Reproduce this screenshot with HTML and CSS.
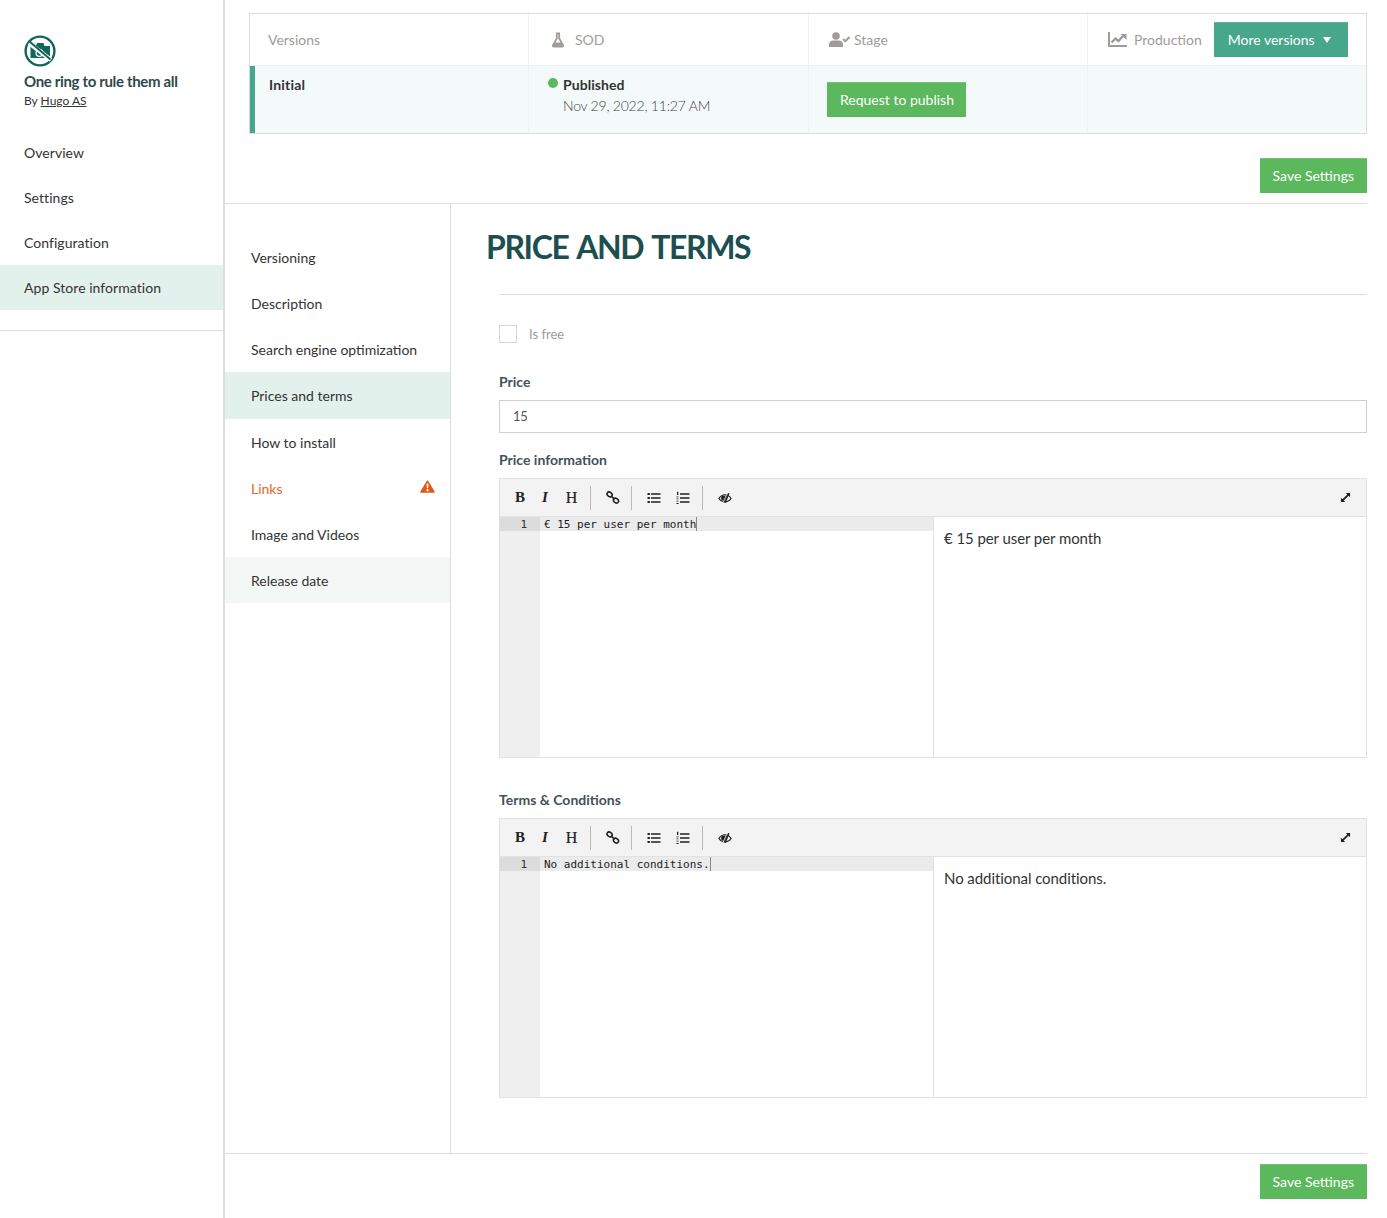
FILE: index.html
```html
<!DOCTYPE html>
<html lang="en">
<head>
<meta charset="utf-8">
<title>Price and terms</title>
<link rel="stylesheet" href="styles.css">
</head>
<body>
<svg class="defs" width="0" height="0" aria-hidden="true">
  <defs>
    <symbol id="i-link" viewBox="0 0 14 14"><g fill="none" stroke="#222" stroke-width="1.600"><ellipse cx="3.600" cy="3.400" rx="2.700" ry="2.100" transform="rotate(35 3.600 3.400)"/><ellipse cx="10" cy="9.600" rx="2.700" ry="2.100" transform="rotate(35 10 9.600)"/><path d="M5 5l3.500 3.200"/></g></symbol>
    <symbol id="i-ul" viewBox="0 0 14 14"><path fill="#222" d="M.5 2h2.400v2H.5zM.5 6h2.400v2H.5zM.5 10h2.400v2H.5zM4 2.300h9.500v1.500H4zM4 6.300h9.500v1.500H4zM4 10.300h9.500v1.500H4z"/></symbol>
    <symbol id="i-ol" viewBox="0 0 14 14"><path fill="#222" d="M1 .8h1.300v3.200H1zM.4 5.400h2.200v.8H.4zM.4 7.400h2.200v.9H.4zM.4 9.700h2.200v.8H.4zM.4 12h2.200v.9H.4zM4 2.300h9.500v1.500H4zM4 6.300h9.500v1.500H4zM4 10.300h9.500v1.500H4z"/></symbol>
    <symbol id="i-eye" viewBox="0 0 14 14"><path fill="none" stroke="#222" stroke-width="1.100" d="M.9 7.400C2.500 5 4.700 3.800 7 3.800s4.500 1.200 6.100 3.600c-1.600 2.300-3.800 3.500-6.100 3.500S2.500 9.700.9 7.400z"/><path fill="#222" d="M3.200 5.600C4.300 4.800 5.600 4.400 7 4.400c.7 0 1.300.1 2 .4l-2.500 5.400c-1.300-.1-2.500-.7-3.300-1.600z"/><path fill="none" stroke="#f3f3f3" stroke-width=".8" d="M8.600 3.400 5 11.400"/><path fill="none" stroke="#222" stroke-width="1.600" d="M10.800 2.200 7 11.600"/></symbol>
    <symbol id="i-expand" viewBox="0 0 12 12"><path fill="#222" d="M6.400 1h4.600v4.600L9.400 4 4 9.400 5.600 11H1V6.400L2.600 8 8 2.600z"/></symbol>
  </defs>
</svg>
<div class="page">
  <aside class="sidebar">
    <div class="brand">
      <svg class="brand-logo" viewBox="0 0 32 32" width="32" height="32" aria-hidden="true">
        <circle cx="16" cy="16" r="14.400" fill="none" stroke="#12665c" stroke-width="2.400"/>
        <path fill="#12665c" d="M6.500 11h5.500l1-3h6.500l1 3h5.500v12h-19.500z"/>
        <circle cx="15.500" cy="18" r="3.400" fill="none" stroke="#fff" stroke-width="1.300"/>
        <path d="M5 8l22 17" stroke="#fff" stroke-width="4.200"/>
        <path d="M5.500 6.500l21 18" stroke="#12665c" stroke-width="2"/>
      </svg>
      <div class="brand-name">One ring to rule them all</div>
      <div class="brand-by">By <a href="#">Hugo AS</a></div>
    </div>
    <nav class="side-nav">
      <a class="side-item" href="#">Overview</a>
      <a class="side-item" href="#">Settings</a>
      <a class="side-item" href="#">Configuration</a>
      <a class="side-item is-active" href="#">App Store information</a>
    </nav>
  </aside>

  <main class="main">
    <section class="top">
      <div class="versions">
        <div class="v-head">
          <div class="v-cell"><span class="v-title">Versions</span></div>
          <div class="v-cell v-sod">
            <svg class="v-icon" viewBox="0 0 14 16" width="14" height="16" aria-hidden="true"><path fill="none" stroke="#a09c99" stroke-width="1.800" d="M5 1.500h4M5.800 1.500v5L2 13.200c-.4.800 0 1.300.8 1.300h8.400c.8 0 1.200-.5.800-1.300L8.200 6.500v-5"/><path fill="#a09c99" d="M3.600 10.500h6.800l1.600 3.500H2z"/></svg>
            <span class="v-title">SOD</span>
          </div>
          <div class="v-cell v-stage">
            <svg class="v-icon" viewBox="0 0 21 15" width="21" height="15" aria-hidden="true"><circle cx="7" cy="4" r="3.800" fill="#a09c99"/><path fill="#a09c99" d="M0 15v-2.500C0 10 2 8.500 4 8.500h6c2 0 4 1.500 4 4V15z"/><path fill="none" stroke="#a09c99" stroke-width="2" d="M14 7l2.200 2.200L20.500 5"/></svg>
            <span class="v-title">Stage</span>
          </div>
          <div class="v-cell v-prod">
            <svg class="v-icon" viewBox="0 0 19 15" width="19" height="15" aria-hidden="true"><path fill="none" stroke="#a09c99" stroke-width="2" d="M1 0v14h18"/><path fill="none" stroke="#a09c99" stroke-width="2.400" d="M3.500 10.500l4-4 3 2.500 4.500-5"/><path fill="#a09c99" d="M12.500 2h6v6z"/></svg>
            <span class="v-title">Production</span>
            <button class="btn btn-teal" type="button">More versions<span class="caret"></span></button>
          </div>
        </div>
        <div class="v-row">
          <div class="v-cell v-name">Initial</div>
          <div class="v-cell v-status">
            <div class="status-line"><span class="dot"></span><strong>Published</strong></div>
            <div class="status-date">Nov 29, 2022, 11:27 AM</div>
          </div>
          <div class="v-cell v-action"><button class="btn btn-green" type="button">Request to publish</button></div>
          <div class="v-cell"></div>
        </div>
      </div>
      <div class="save-row"><button class="btn btn-green" type="button">Save Settings</button></div>
    </section>

    <div class="body">
      <nav class="sub-nav">
        <a class="sub-item" href="#">Versioning</a>
        <a class="sub-item" href="#">Description</a>
        <a class="sub-item" href="#">Search engine optimization</a>
        <a class="sub-item is-active" href="#">Prices and terms</a>
        <a class="sub-item" href="#">How to install</a>
        <a class="sub-item is-warn" href="#">Links
          <svg class="warn-icon" viewBox="0 0 16 14" width="15" height="13" aria-hidden="true"><path fill="#dc5a12" stroke="#dc5a12" stroke-width="2" stroke-linejoin="round" d="M8 1.500 1.200 12.800h13.600z"/><path fill="#fff" d="M7 3.800h2l-.3 5H7.300zM7 10h2v2H7z"/></svg>
        </a>
        <a class="sub-item" href="#">Image and Videos</a>
        <a class="sub-item is-soft" href="#">Release date</a>
      </nav>

      <div class="content">
        <h1 class="heading">PRICE AND TERMS</h1>
        <div class="form">
          <label class="check"><span class="check-box"></span><span>Is free</span></label>
          <div class="field-label label-price">Price</div>
          <div class="input">15</div>
          <div class="field-label label-info">Price information</div>
          <div class="editor">
            <div class="toolbar">
              <span class="tb tb-b">B</span><span class="tb tb-i">I</span><span class="tb tb-h">H</span>
              <span class="sep sep-a"></span>
              <svg class="tb-icon" width="14" height="14"><use href="#i-link"/></svg>
              <span class="sep sep-b"></span>
              <svg class="tb-icon" width="14" height="14"><use href="#i-ul"/></svg>
              <svg class="tb-icon" width="14" height="14"><use href="#i-ol"/></svg>
              <span class="sep sep-c"></span>
              <svg class="tb-icon" width="14" height="14"><use href="#i-eye"/></svg>
              <svg class="tb-expand" width="11" height="11"><use href="#i-expand"/></svg>
            </div>
            <div class="ed-body">
              <div class="code">
                <div class="gutter"><span class="ln">1</span></div>
                <div class="lines"><div class="line"><span class="line-text">€ 15 per user per month</span></div></div>
              </div>
              <div class="preview">€ 15 per user per month</div>
            </div>
          </div>
          <div class="field-label label-terms">Terms &amp; Conditions</div>
          <div class="editor">
            <div class="toolbar">
              <span class="tb tb-b">B</span><span class="tb tb-i">I</span><span class="tb tb-h">H</span>
              <span class="sep sep-a"></span>
              <svg class="tb-icon" width="14" height="14"><use href="#i-link"/></svg>
              <span class="sep sep-b"></span>
              <svg class="tb-icon" width="14" height="14"><use href="#i-ul"/></svg>
              <svg class="tb-icon" width="14" height="14"><use href="#i-ol"/></svg>
              <span class="sep sep-c"></span>
              <svg class="tb-icon" width="14" height="14"><use href="#i-eye"/></svg>
              <svg class="tb-expand" width="11" height="11"><use href="#i-expand"/></svg>
            </div>
            <div class="ed-body">
              <div class="code">
                <div class="gutter"><span class="ln">1</span></div>
                <div class="lines"><div class="line"><span class="line-text">No additional conditions.</span></div></div>
              </div>
              <div class="preview">No additional conditions.</div>
            </div>
          </div>
        </div>
      </div>
    </div>

    <footer class="foot"><button class="btn btn-green" type="button">Save Settings</button></footer>
  </main>
</div>
</body>
</html>
```
FILE: styles.css
```css
* { box-sizing: border-box; }
html, body { margin: 0; padding: 0; }
body { font-family: Lato, "Open Sans", sans-serif; font-size: 14px; color: #333; background: #fff; }
.defs { position: absolute; }
a { color: inherit; text-decoration: none; }

.page { display: flex; width: 1387px; height: 1218px; overflow: hidden; }

.sidebar { width: 225px; flex: none; border-right: 2px solid #dedede; }
.brand { padding: 35px 0 0 24px; height: 130px; }
.brand-logo { display: block; margin-bottom: 4px; }
.brand-name { font-size: 15px; font-weight: 700; line-height: 20px; color: #2f4a4a; letter-spacing: -.34px; }
.brand-by { font-size: 12px; line-height: 18px; margin-top: 1px; color: #333; }
.brand-by a { text-decoration: underline; }
.side-nav { display: flex; flex-direction: column; border-bottom: 1px solid #dedede; padding-bottom: 20px; }
.side-item { height: 45px; line-height: 46px; padding-left: 24px; color: #333; letter-spacing: .05px; }
.side-item.is-active { background: #e3f1ec; }

.main { flex: 1; display: flex; flex-direction: column; min-width: 0; }

.top { height: 204px; margin-right: 20px; padding: 13px 0 0 24px; border-bottom: 1px solid #dedede; }
.versions { border: 1px solid #dcdcdc; border-bottom-width: 2px; height: 121px; }
.v-head, .v-row { display: grid; grid-template-columns: 279px 280px 279px 1fr; }
.v-head { height: 52px; border-bottom: 1px solid #f0f2f1; }
.v-row { height: 67px; background: #f4f9f9; }
.v-cell { border-right: 1px solid #f0f2f1; min-width: 0; }
.v-cell:last-child { border-right: 0; }
.v-head .v-cell { display: flex; align-items: center; padding-left: 18px; }
.v-title { color: #a09c99; font-size: 14px; }
.v-icon { flex: none; }
.v-sod { padding-left: 22px !important; gap: 10px; }
.v-stage { padding-left: 20px !important; gap: 4px; }
.v-prod { padding-left: 20px !important; gap: 7px; }
.btn { border: 0; border-top: 1px solid rgba(255,255,255,.15); color: #fff; font: 14px/1 Lato, sans-serif; height: 35px; padding: 0 13px; }
.btn-green { background: #5cb85c; }
.btn-teal { background: #46a78b; margin-left: 5px; display: inline-flex; align-items: center; gap: 8px; padding: 0 17px 0 14px; }
.caret { width: 0; height: 0; border: 4.500px solid transparent; border-top: 6px solid #fff; border-bottom: 0; }
.v-name { border-left: 5px solid #46a78b; font-weight: 700; color: #333; padding: 10px 0 0 14px; line-height: 17px; letter-spacing: .2px; }
.v-status { padding: 10px 0 0 19px; }
.status-line { display: flex; align-items: center; gap: 5px; line-height: 18px; color: #333; }
.status-line strong { font-weight: 700; letter-spacing: .05px; }
.dot { width: 10px; height: 10px; border-radius: 50%; background: #5cb85c; margin-top: -4px; }
.status-date { padding-left: 15px; margin-top: 3px; font-weight: 300; color: #444; line-height: 18px; letter-spacing: -.22px; }
.v-action { padding: 16px 0 0 18px; }
.v-action .btn { padding-right: 12px; }
.save-row { display: flex; justify-content: flex-end; margin-top: 24px; }

.body { flex: 1; display: flex; min-height: 0; }
.sub-nav { width: 226px; flex: none; border-right: 1px solid #dedede; padding-top: 31px; display: flex; flex-direction: column; }
.sub-item { height: 46px; line-height: 46px; padding-left: 26px; color: #333; position: relative; }
.sub-item.is-active { background: #e3f1ec; height: 47px; margin-top: -1px; line-height: 47px; }
.sub-item.is-active + .sub-item { margin-top: 1px; }
.sub-item.is-warn { color: #df6a2c; }
.sub-item.is-soft { background: #f3f8f6; margin-top: -1px; line-height: 48px; }
.warn-icon { position: absolute; right: 15px; top: 14px; }

.content { flex: 1; min-width: 0; padding: 0 20px 0 36px; }
.heading { margin: 24px 0 0 -1px; font-size: 32px; line-height: 38px; font-weight: 700; color: #1d4f4f; letter-spacing: -1.4px; word-spacing: 2.500px; }
.form { margin: 28px 0 0 12px; border-top: 1px solid #dedede; }
.check { display: flex; align-items: center; gap: 12px; margin-top: 30px; color: #a09c99; font-size: 13px; height: 18px; }
.check-box { width: 18px; height: 18px; border: 1px solid #d6d6d6; background: #fff; }
.field-label { font-weight: 700; color: #44505a; line-height: 18px; }
.label-price { margin-top: 30px; }
.label-info { margin-top: 18px; }
.label-terms { margin-top: 33px; }
.input { margin-top: 9px; height: 33px; border: 1px solid #ccd0d4; padding: 0 13px; line-height: 31px; font-size: 13px; color: #555; letter-spacing: -.2px; }
.editor { margin-top: 9px; border: 1px solid #e2e2e2; height: 280px; display: flex; flex-direction: column; }
.toolbar { height: 38px; flex: none; background: #f3f3f3; border-bottom: 1px solid #e2e2e2; display: flex; align-items: center; padding-left: 15px; position: relative; }
.tb { font: 15px/1 "Liberation Serif", serif; color: #222; width: 10px; text-align: center; }
.tb-b { font-weight: 700; }
.tb-i { font-style: italic; font-weight: 700; margin-left: 15px; }
.tb-h { margin-left: 15px; width: 13px; font-size: 16px; font-weight: 400; -webkit-text-stroke: .2px #222; }
.sep { width: 1px; height: 24px; background: #bbb; flex: none; }
.sep-a { margin: 0 15px 0 12px; }
.sep-b { margin: 0 15px 0 11px; }
.sep-c { margin: 0 15px 0 12px; }
.tb-icon { flex: none; }
.tb-icon + .tb-icon { margin-left: 15px; }
.tb-expand { position: absolute; right: 15px; top: 13px; }
.ed-body { flex: 1; display: grid; grid-template-columns: 434px 1fr; min-height: 0; }
.code { display: flex; border-right: 1px solid #e2e2e2; }
.gutter { width: 40px; flex: none; background: #efefef; font: 11px/14px "DejaVu Sans Mono", monospace; color: #333; }
.ln { display: block; height: 14px; background: #dcdcdc; text-align: right; padding: 1px 13px 0 0; line-height: 14px; }
.lines { flex: 1; min-width: 0; }
.line { height: 14px; background: #ebebeb; padding-left: 4px; font: 11px/15px "DejaVu Sans Mono", monospace; color: #222; }
.line-text { border-right: 1px solid #888; display: inline-block; height: 14px; }
.preview { padding: 11px 10px; font-size: 15px; line-height: 20px; color: #333; letter-spacing: -.07px; }

.foot { height: 65px; border-top: 1px solid #dedede; display: flex; justify-content: flex-end; padding: 10px 0 0; margin-right: 20px; flex: none; }
```
